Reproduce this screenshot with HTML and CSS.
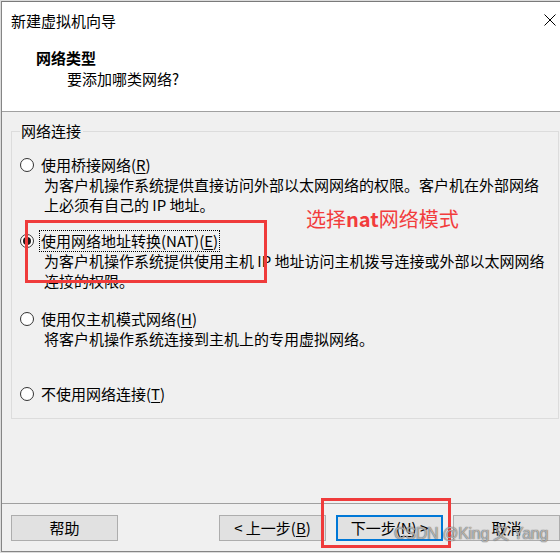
FILE: index.html
```html
<!DOCTYPE html>
<html lang="zh-CN">
<head>
<meta charset="utf-8">
<title>新建虚拟机向导</title>
<link rel="stylesheet" href="styles.css">
</head>
<body>
<div class="window">
  <header class="head">
    <div class="titlebar">
      <span class="title">新建虚拟机向导</span>
      <svg class="close" width="12" height="12" viewBox="0 0 12 12"><path d="M0.5 0.5 L11.5 11.5 M11.5 0.5 L0.5 11.5" stroke="#000" stroke-width="1" fill="none"/></svg>
    </div>
    <div class="heading">网络类型</div>
    <div class="sub">要添加哪类网络?</div>
  </header>
  <main class="body">
    <div class="group">
      <div class="legend">网络连接</div>
      <div class="opt opt-1">
        <div class="row"><span class="radio"></span><span class="label">使用桥接网络(<u>R</u>)</span></div>
        <div class="desc">为客户机操作系统提供直接访问外部以太网网络的权限。客户机在外部网络<br>上必须有自己的 IP 地址。</div>
      </div>
      <div class="opt opt-2">
        <div class="row"><span class="radio on"></span><span class="label focus">使用网络地址转换(NAT)(<u>E</u>)</span></div>
        <div class="desc">为客户机操作系统提供使用主机 IP 地址访问主机拨号连接或外部以太网网络<br>连接的权限。</div>
      </div>
      <div class="opt opt-3">
        <div class="row"><span class="radio"></span><span class="label">使用仅主机模式网络(<u>H</u>)</span></div>
        <div class="desc">将客户机操作系统连接到主机上的专用虚拟网络。</div>
      </div>
      <div class="opt opt-4">
        <div class="row"><span class="radio"></span><span class="label">不使用网络连接(<u>T</u>)</span></div>
      </div>
    </div>
  </main>
  <footer class="foot">
    <button class="btn">帮助</button>
    <div class="nav">
      <button class="btn">&lt; 上一步(<u>B</u>)</button>
      <button class="btn primary">下一步(<u>N</u>) &gt;</button>
      <button class="btn">取消</button>
    </div>
  </footer>
</div>
<div class="mark mark-nat"></div>
<div class="note">选择<b>nat</b>网络模式</div>
<div class="mark mark-next"></div>
<div class="watermark">CSDN @King 又 Yang</div>
</body>
</html>
```
FILE: styles.css
```css
html, body {
  margin: 0;
  padding: 0;
  background: #dcdcdc;
}
body {
  width: 560px;
  height: 553px;
  overflow: hidden;
  font-family: "Noto Sans CJK SC", "Microsoft YaHei", sans-serif;
  font-size: 15px;
  line-height: 20px;
  color: #000;
}
.window {
  margin: 1px 0 0 1px;
  border-left: 1px solid #858585;
  border-top: 1px solid #7a7a7a;
  border-bottom: 1px solid #858585;
  height: 549px;
  display: flex;
  flex-direction: column;
  background: #f0f0f0;
}
.head {
  height: 100px;
  background: #fff;
  border-bottom: 1px solid #a0a0a0;
  padding-top: 9px;
  box-sizing: content-box;
}
.titlebar {
  display: flex;
  align-items: center;
  justify-content: space-between;
  padding: 0 4px 0 9px;
}
.close { display: block; margin-top: -2px; }
.heading {
  margin-top: 17px;
  padding-left: 34px;
  font-weight: bold;
}
.sub {
  margin-top: 1px;
  padding-left: 65px;
}
.body {
  flex: 1;
  padding-top: 19px;
}
.group {
  margin: 0 1px 0 9px;
  border: 1px solid #dcdcdc;
  padding: 0 0 14px 8px;
}
.legend {
  width: fit-content;
  margin-top: -11px;
  padding: 0 2px 0 1px;
  background: #f0f0f0;
}
.opt-1 { margin-top: 14px; }
.opt-2 { margin-top: 16px; }
.opt-3 { margin-top: 18px; }
.opt-4 { margin-top: 35px; }
.row {
  display: flex;
  align-items: center;
  height: 20px;
}
.radio {
  width: 14px;
  height: 14px;
  box-sizing: border-box;
  border: 1px solid #333;
  border-radius: 50%;
  background: #fff;
  margin-right: 6px;
  display: flex;
  align-items: center;
  justify-content: center;
}
.radio.on::after {
  content: "";
  width: 8px;
  height: 8px;
  border-radius: 50%;
  background: #1a1a1a;
}
.label {
  padding: 0 1px;
}
.label.focus {
  outline: 1px dotted #000;
  outline-offset: 0;
}
.desc {
  margin-left: 24px;
  white-space: nowrap;
}
u { text-decoration: underline; text-underline-offset: 2px; }
.foot {
  height: 36px;
  border-top: 1px solid #a0a0a0;
  padding: 11px 0 0 9px;
  display: flex;
  align-items: flex-start;
}
.nav {
  margin-left: auto;
  display: flex;
  gap: 10px;
}
.btn {
  width: 107px;
  height: 26px;
  box-sizing: border-box;
  border: 1px solid #adadad;
  background: #e1e1e1;
  font: inherit;
  line-height: 20px;
  color: #000;
  padding: 0;
  margin: 0;
}
.btn.primary {
  border: 2px solid #0078d7;
}
.mark {
  position: absolute;
  border: 3px solid #ef3b3b;
  box-sizing: border-box;
}
.mark-nat {
  left: 25px;
  top: 220px;
  width: 242px;
  height: 63px;
}
.mark-next {
  left: 321px;
  top: 498px;
  width: 130px;
  height: 50px;
}
.note {
  position: absolute;
  left: 306px;
  top: 207px;
  font-size: 20px;
  line-height: 24px;
  color: #f23c3c;
  white-space: nowrap;
}
.note b { font-weight: bold; }
.watermark {
  position: absolute;
  left: 394px;
  top: 524px;
  font-family: "Liberation Sans", Arial, sans-serif;
  font-size: 16px;
  line-height: 20px;
  letter-spacing: -0.3px;
  color: rgba(255, 255, 255, 0.55);
  text-shadow: 0 0 1px rgba(60, 60, 60, 0.8), 0 0 1px rgba(60, 60, 60, 0.6);
  white-space: nowrap;
}
```
